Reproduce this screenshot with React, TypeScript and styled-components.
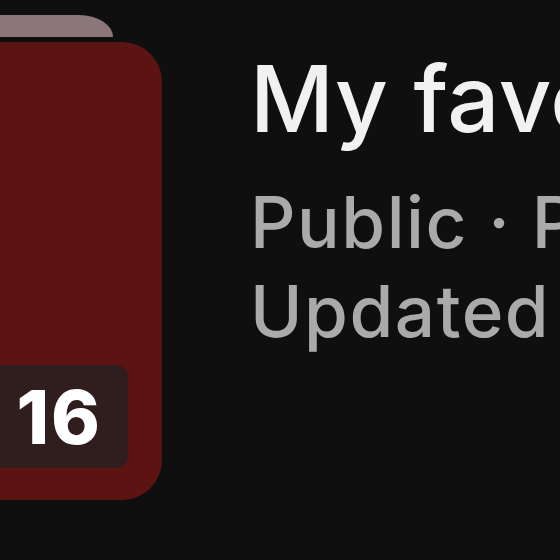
import React from "react";
import styled, { createGlobalStyle } from "styled-components";

const Global = createGlobalStyle`
  html, body {
    margin: 0;
    padding: 0;
    background: #0f0f0f;
    overflow: hidden;
  }
  body {
    font-family: Inter, Roboto, "Liberation Sans", Arial, sans-serif;
  }
`;

const Page = styled.div`
  width: 560px;
  height: 560px;
  overflow: hidden;
  background: #0f0f0f;
`;

const Row = styled.div`
  display: flex;
  align-items: flex-start;
`;

const Thumb = styled.div`
  flex: none;
  width: 202px;
  margin-left: -40px;
  padding-top: 15px;
  display: flex;
  flex-direction: column;
`;

const StackTab = styled.div`
  height: 22px;
  margin-right: 49px;
  background: #8b7779;
  border-radius: 0 34px 0 0 / 0 22px 0 0;
`;

const Card = styled.div`
  margin-top: 5px;
  height: 458px;
  background: #5c1413;
  border-radius: 40px;
  display: flex;
  flex-direction: column;
  justify-content: flex-end;
  align-items: flex-end;
  padding-bottom: 32px;
  box-sizing: border-box;
`;

const Badge = styled.div`
  margin-right: 34px;
  width: 188px;
  height: 103px;
  box-sizing: border-box;
  padding-right: 26px;
  background: #2f1e1d;
  border-radius: 12px;
  display: flex;
  align-items: center;
  justify-content: flex-end;
  color: #ffffff;
  font-weight: 800;
  font-size: 74px;
  letter-spacing: 2px;
  line-height: 1;
`;

const Info = styled.div`
  flex: none;
  margin-left: 88px;
  padding-top: 44px;
  display: flex;
  flex-direction: column;
  white-space: nowrap;
`;

const Title = styled.div`
  color: #f1f1f1;
  font-size: 92px;
  line-height: 110px;
  font-weight: 500;
  letter-spacing: 0.5px;
`;

const Meta = styled.div<{ $first?: boolean }>`
  color: #aaaaaa;
  font-size: 71px;
  line-height: 89px;
  font-weight: 500;
  letter-spacing: 1.5px;
  margin-top: ${(p) => (p.$first ? "24px" : "0")};
`;

export default function App() {
  return (
    <Page>
      <Global />
      <Row>
        <Thumb>
          <StackTab />
          <Card>
            <Badge>16</Badge>
          </Card>
        </Thumb>
        <Info>
          <Title>My favorites</Title>
          <Meta $first>Public · Playlist</Meta>
          <Meta>Updated today</Meta>
        </Info>
      </Row>
    </Page>
  );
}
